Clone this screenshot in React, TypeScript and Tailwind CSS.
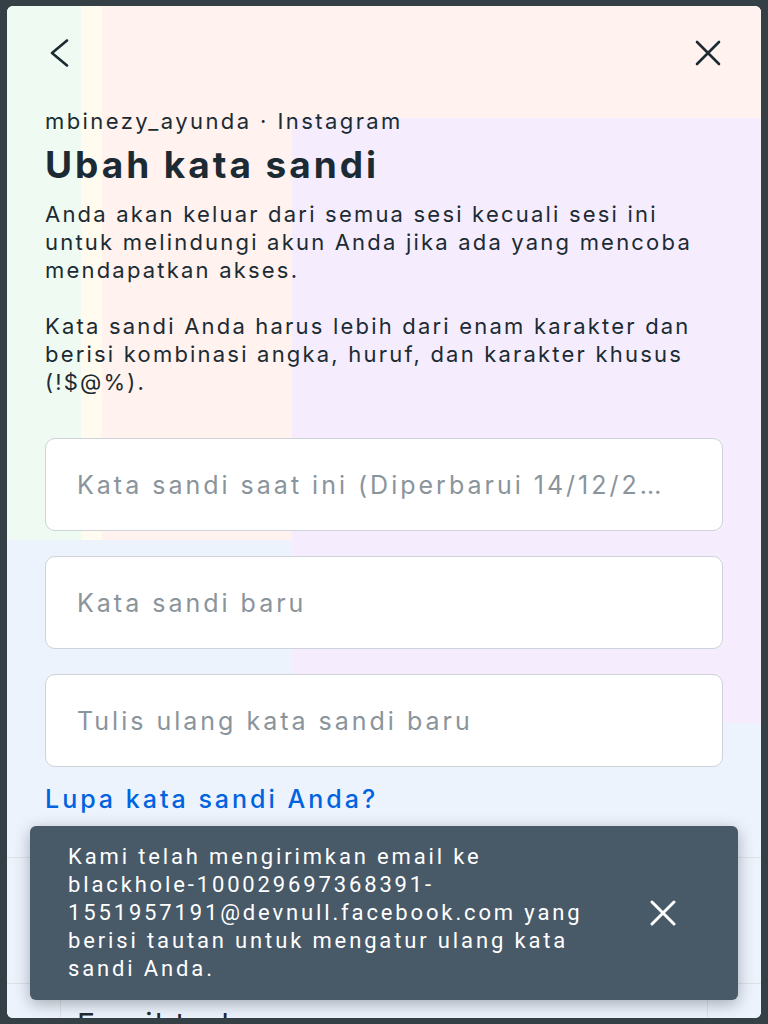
import { ChevronRight } from 'lucide-react'

const ink = 'text-[#1c2b33]'

function BackIcon() {
  return (
    <svg width="26" height="28" viewBox="0 0 26 28" fill="none" stroke="#1c2b33" strokeWidth="2.6" strokeLinecap="round" strokeLinejoin="round">
      <path d="M22 1.5 L7 14 L22 26.5" />
    </svg>
  )
}

function CloseIcon({ color = '#1c2b33', width = 2.6 }: { color?: string; width?: number }) {
  return (
    <svg width="26" height="26" viewBox="0 0 26 26" fill="none" stroke={color} strokeWidth={width} strokeLinecap="round">
      <path d="M2 2 L24 24 M24 2 L2 24" />
    </svg>
  )
}

function PasswordField({ placeholder }: { placeholder: string }) {
  return (
    <input
      type="password"
      placeholder={placeholder}
      className="h-[93px] w-full rounded-[10px] border border-[#cdd3d9] bg-white px-[31px] text-[25px] tracking-[0.12em] text-[#1c2b33] outline-none placeholder:text-[#8a949b]"
    />
  )
}

export default function App() {
  return (
    <div className="h-[1024px] overflow-hidden bg-[#353f46] pt-[6px] font-['Inter',sans-serif]">
      <div className="relative mx-[7px] h-[1012px] overflow-hidden rounded-[6px] bg-white">
        {/* pastel tint regions */}
        <div className="pointer-events-none absolute inset-0">
          <div className="absolute left-0 top-0 h-[534px] w-[74px] bg-[#eefaf2]" />
          <div className="absolute left-[74px] top-0 h-[534px] w-[21px] bg-[#fffbef]" />
          <div className="absolute left-[95px] right-0 top-0 h-[112px] bg-[#fff2ef]" />
          <div className="absolute left-[95px] top-[112px] h-[422px] w-[190px] bg-[#fff2ef]" />
          <div className="absolute left-[285px] right-0 top-[112px] h-[605px] bg-[#f5edfd]" />
          <div className="absolute bottom-0 left-0 top-[534px] w-[285px] bg-[#ecf3fd]" />
          <div className="absolute bottom-0 left-[285px] right-0 top-[717px] bg-[#ecf3fd]" />
        </div>

        <div className="relative flex flex-col px-[38px]">
          <div className="mt-[23px] flex h-[48px] items-center justify-between">
            <button className="flex h-[28px] w-[26px] items-center">
              <BackIcon />
            </button>
            <button className="mr-[2px]">
              <CloseIcon />
            </button>
          </div>

          <p className={`mt-[30px] whitespace-nowrap text-[22px] leading-[28px] tracking-[0.11em] ${ink}`}>mbinezy_ayunda · Instagram</p>
          <h1 className={`mt-[10px] whitespace-nowrap text-[37px] font-bold leading-[40px] tracking-[0.08em] ${ink}`}>Ubah kata sandi</h1>

          <p className={`mt-[15px] whitespace-nowrap text-[22px] leading-[28px] tracking-[0.1em] ${ink}`}>
            Anda akan keluar dari semua sesi kecuali sesi ini
            <br />
            untuk melindungi akun Anda jika ada yang mencoba
            <br />
            mendapatkan akses.
          </p>
          <p className={`mt-[28px] whitespace-nowrap text-[22px] leading-[28px] tracking-[0.1em] ${ink}`}>
            Kata sandi Anda harus lebih dari enam karakter dan
            <br />
            berisi kombinasi angka, huruf, dan karakter khusus
            <br />
            (!$@%).
          </p>

          <div className="mt-[42px] flex flex-col gap-[25px]">
            <PasswordField placeholder="Kata sandi saat ini (Diperbarui 14/12/2…" />
            <PasswordField placeholder="Kata sandi baru" />
            <PasswordField placeholder="Tulis ulang kata sandi baru" />
          </div>

          <a href="#" className="mt-[16px] whitespace-nowrap text-[25px] font-medium leading-[32px] tracking-[0.12em] text-[#0064e0]">
            Lupa kata sandi Anda?
          </a>

          {/* list behind the snackbar */}
          <div className="-mx-[38px] mt-[11px]">
            <div className="h-[31px]">
              <div className="mx-[53px] h-full border-x border-[#dde2e6]" />
            </div>
            <div className="h-[126px] border-t border-[#dde2e6]">
              <div className="mx-[53px] h-full border-x border-[#dde2e6]" />
            </div>
            <div className="h-[80px] border-t border-[#dde2e6]">
              <div className={`mx-[53px] flex h-full items-start justify-between border-x border-[#dde2e6] pl-[16px] pt-[22px] text-[30px] leading-[36px] tracking-[0.08em] ${ink}`}>
                <span>Email terbaru</span>
                <ChevronRight size={26} strokeWidth={2} className="mt-[8px]" />
              </div>
            </div>
          </div>
        </div>

        {/* snackbar */}
        <div className="absolute bottom-[18px] left-[23px] right-[23px] flex h-[174px] items-center justify-between rounded-[6px] bg-[#485968] pl-[38px] pr-[62px] shadow-[0_4px_16px_rgba(0,0,0,0.3)]">
          <p className="whitespace-nowrap font-['Roboto',sans-serif] text-[22px] leading-[28px] tracking-[0.13em] text-white">
            Kami telah mengirimkan email ke
            <br />
            blackhole-100029697368391-
            <br />
            1551957191@devnull.facebook.com yang
            <br />
            berisi tautan untuk mengatur ulang kata
            <br />
            sandi Anda.
          </p>
          <button>
            <CloseIcon color="#ffffff" width={3} />
          </button>
        </div>
      </div>
    </div>
  )
}
